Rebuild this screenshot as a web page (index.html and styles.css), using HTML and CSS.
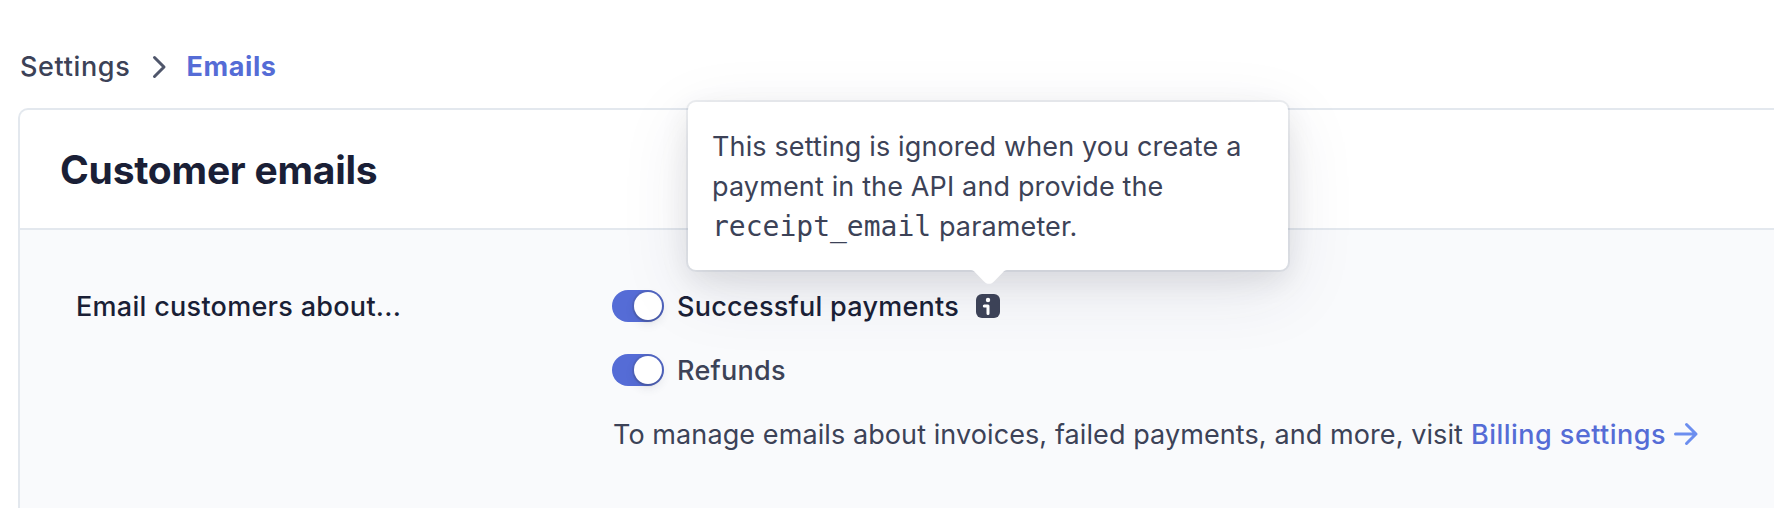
FILE: index.html
```html
<!DOCTYPE html>
<html lang="en">
<head>
<meta charset="utf-8">
<title>Settings – Emails</title>
<link rel="stylesheet" href="styles.css">
</head>
<body>
<nav class="breadcrumb">
  <span class="crumb">Settings</span>
  <svg class="chevron" width="16" height="24" viewBox="0 0 16 24"><path d="M2.500 2.500 12 12 2.500 21.500" fill="none" stroke="#4f566b" stroke-width="3" stroke-linecap="round" stroke-linejoin="round"/></svg>
  <span class="crumb-active">Emails</span>
</nav>
<section class="card">
  <header class="card-header"><h1 class="title">Customer emails</h1></header>
  <div class="card-body">
    <div class="label">Email customers about...</div>
    <div class="options">
      <div class="option">
        <span class="toggle"><span class="knob"></span></span>
        <span class="option-text option-strong">Successful payments</span>
        <span class="info">
          <svg class="info-icon" width="24" height="24" viewBox="0 0 24 24"><rect width="24" height="24" rx="6" fill="#3c4257"/><circle cx="12" cy="6" r="2.2" fill="#fff"/><path d="M8.300 12H12V19.500" fill="none" stroke="#fff" stroke-width="3" stroke-linecap="round" stroke-linejoin="round"/></svg>
          <span class="tooltip">
            <span class="line">This setting is ignored when you create a</span>
            <span class="line">payment in the API and provide the</span>
            <span class="line"><code class="code">receipt_email</code> parameter.</span>
            <svg class="tip" width="36" height="16" viewBox="0 0 36 16"><path d="M0 0H36C34 0 33.200 1 32 2.200L23.500 11C20 14.800 16 14.800 12.500 11L4 2.200C2.800 1 2 0 0 0Z" fill="#fff"/></svg>
          </span>
        </span>
      </div>
      <div class="option">
        <span class="toggle"><span class="knob"></span></span>
        <span class="option-text">Refunds</span>
      </div>
      <p class="note"><span class="note-text">To manage emails about invoices, failed payments, and more, visit</span><a class="link">Billing settings</a><svg class="arrow" width="26" height="24" viewBox="0 0 26 24"><path d="M2.500 12H23M13.500 2.500 23 12 13.500 21.500" fill="none" stroke="#6c8eef" stroke-width="3" stroke-linecap="round" stroke-linejoin="round"/></svg></p>
    </div>
  </div>
</section>
</body>
</html>
```
FILE: styles.css
```css
* { box-sizing: border-box; }
html { height: 508px; overflow: hidden; }
body {
  margin: 0;
  height: 508px;
  overflow: hidden;
  background: #fff;
  color: #3c4257;
  font: 400 27px/40px Inter, sans-serif;
  white-space: nowrap;
}
.breadcrumb {
  display: flex;
  align-items: center;
  height: 108px;
  padding: 26px 0 0 20px;
}
.crumb { width: 132px; font-weight: 500; letter-spacing: .65px; }
.chevron { margin: -1px 18.500px 0 0; }
.crumb-active { font-weight: 700; color: #556cd6; letter-spacing: .6px; }
.card {
  width: 1756px;
  height: 400px;
  margin-left: 18px;
  border: 2px solid #e3e8ee;
  border-width: 2px 0 0 2px;
  border-top-left-radius: 10px;
}
.card-header {
  display: flex;
  align-items: center;
  height: 120px;
  padding: 2px 0 0 40px;
  border-bottom: 2px solid #e3e8ee;
}
.title { margin: 0; font-size: 39px; line-height: 48px; font-weight: 700; letter-spacing: -.25px; color: #1a1f36; }
.card-body {
  display: flex;
  height: 278px;
  padding: 56px 0 0 56px;
  background: #f9fafc;
}
.label { width: 536px; padding-top: 1px; font-weight: 500; letter-spacing: .29px; color: #1a1f36; }
.options { display: flex; flex-direction: column; gap: 24px; }
.option { display: flex; align-items: center; height: 40px; }
.toggle {
  display: flex;
  align-items: center;
  justify-content: flex-end;
  width: 52px;
  height: 32px;
  margin-right: 13px;
  padding-right: 2px;
  border-radius: 16px;
  background: #556cd6;
}
.knob {
  width: 28px;
  height: 28px;
  border-radius: 50%;
  background: #fff;
  box-shadow: 0 0 0 2px rgba(60, 66, 87, .16), 0 4px 10px rgba(60, 66, 87, .12), 0 2px 2px rgba(0, 0, 0, .12);
}
.option-text { padding-top: 2px; font-weight: 500; letter-spacing: .25px; }
.option-strong { position: relative; z-index: 2; width: 299px; color: #1a1f36; }
.info { position: relative; display: flex; width: 24px; height: 24px; }
.info-icon { position: relative; z-index: 2; }
.tooltip {
  position: absolute;
  z-index: 1;
  left: -288px;
  top: -192px;
  display: flex;
  flex-direction: column;
  width: 600px;
  height: 168px;
  padding: 25px 0 0 24px;
  border-radius: 8px;
  background: #fff;
  box-shadow: 0 0 0 2px rgba(136, 152, 170, .14), 0 20px 70px rgba(49, 49, 93, .1), 0 10px 30px rgba(0, 0, 0, .09);
}
.line { height: 40px; letter-spacing: .14px; }
.code { font: 28px/40px "DejaVu Sans Mono", monospace; letter-spacing: 0; }
.tip { position: absolute; left: 283px; top: 168px; }
.note { display: flex; align-items: center; margin: 0; padding-left: 1px; }
.note-text { width: 858px; padding-top: 1px; letter-spacing: .09px; }
.link { width: 202px; padding-top: 1px; font-weight: 500; letter-spacing: .47px; color: #556cd6; }
.arrow { margin-top: -1px; }
```
